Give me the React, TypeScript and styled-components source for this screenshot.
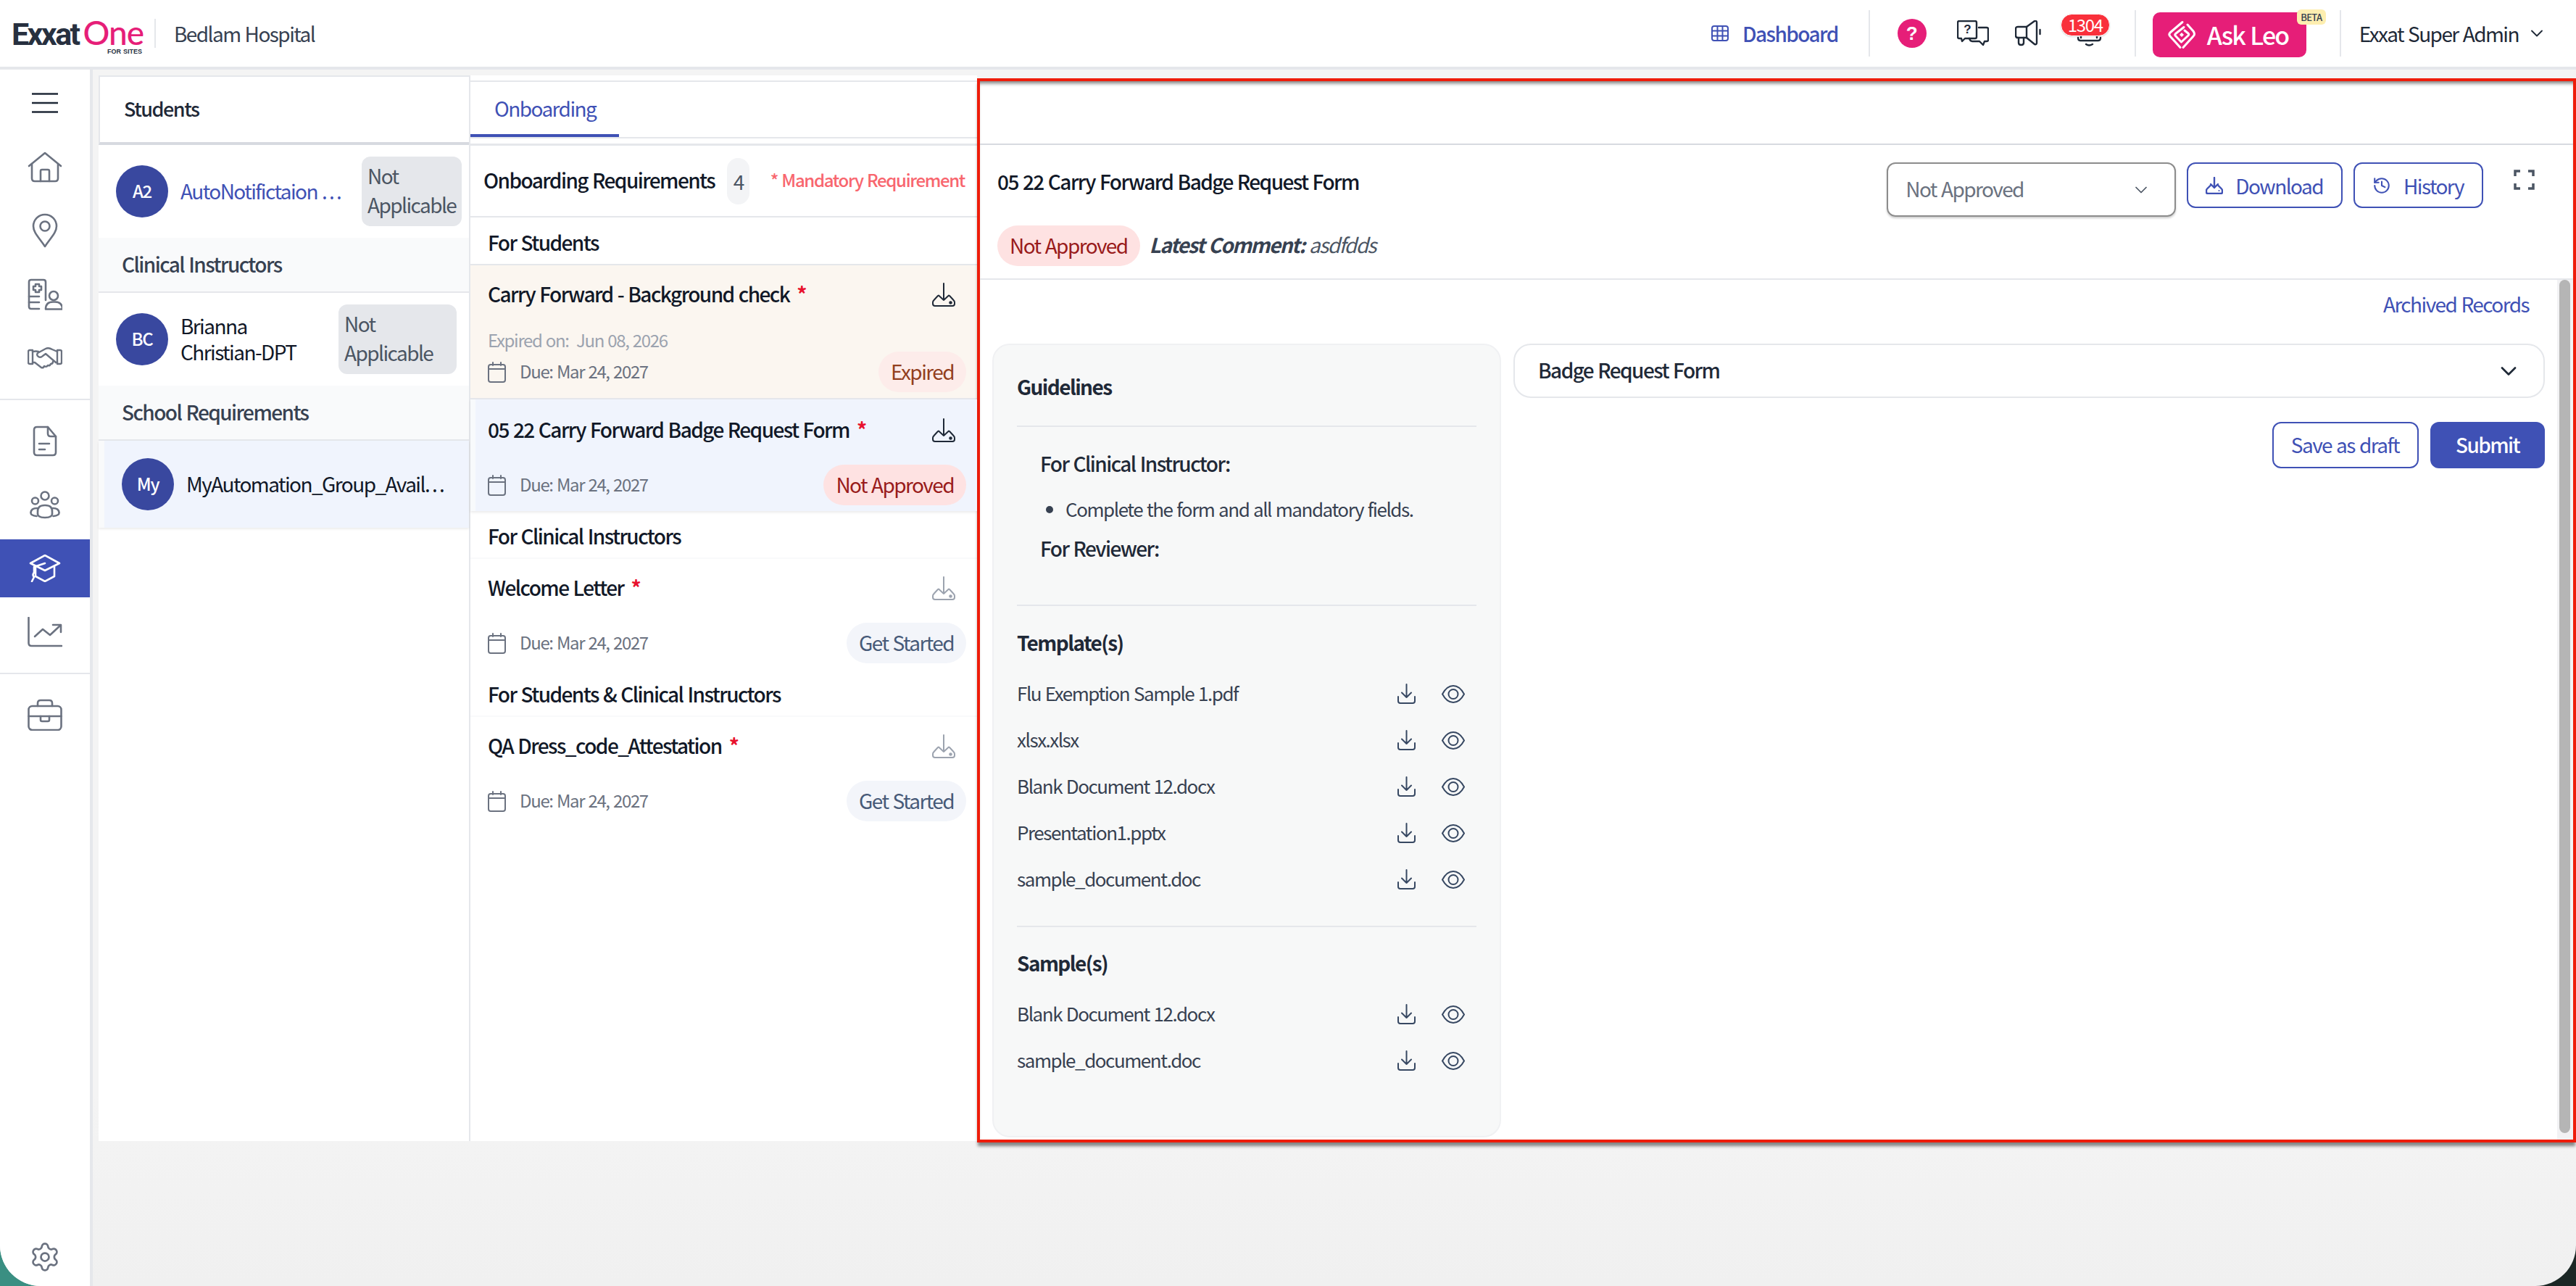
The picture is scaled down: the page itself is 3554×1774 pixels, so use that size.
import React from 'react';
import styled, { createGlobalStyle } from 'styled-components';
import { ChevronDown, History, Settings } from 'lucide-react';

const primary = '#3f51b5';
const line = '#e5e7eb';
const pink = '#e61e78';

const GlobalStyle = createGlobalStyle`
  html, body {
    margin: 0;
    padding: 0;
    height: 100%;
    overflow: hidden;
    background: linear-gradient(to right, #3a8f82 0 50%, #1b2725 50% 100%);
  }
  * { box-sizing: border-box; }
  body * { letter-spacing: -0.056em; word-spacing: 0.05em; }
  #root { height: 100%; }
`;

const Shell = styled.div`
  height: 1774px;
  width: 3554px;
  display: flex;
  flex-direction: column;
  overflow: hidden;
  background: linear-gradient(to bottom, #f4f4f4 85%, #f0f0f0);
  border-radius: 0 0 56px 56px;
  font-family: 'Noto Sans CJK SC', 'Noto Sans', sans-serif;
  font-size: 28px;
  line-height: 36px;
  color: #111827;
`;

/* top bar */
const Header = styled.header`
  height: 96px;
  flex: none;
  display: flex;
  align-items: center;
  background: #fff;
  border-bottom: 4px solid ${line};
  padding: 0 40px 0 16px;
`;
const Logo = styled.div`
  width: 180px;
  display: flex;
  flex-direction: column;
  margin-top: 10px;
`;
const LogoWord = styled.div`
  font-family: 'Roboto', sans-serif;
  font-size: 43px;
  line-height: 38px;
  font-weight: 700;
  letter-spacing: -2.6px;
  color: #27303f;
  white-space: nowrap;
  span {
    font-family: 'Lato', sans-serif;
    font-weight: 500;
    letter-spacing: -1px;
    margin-left: 6px;
    color: ${pink};
    font-size: 46px;
  }
`;
const LogoSub = styled.div`
  font-family: 'Liberation Sans', sans-serif;
  font-size: 9px;
  line-height: 10px;
  font-weight: 700;
  letter-spacing: 0;
  color: #27303f;
  text-align: right;
`;
const Rule = styled.div<{ $left: number; $height?: number }>`
  width: 2px;
  height: ${(p) => p.$height ?? 64}px;
  margin-left: ${(p) => p.$left}px;
  background: ${line};
  flex: none;
`;
const OrgName = styled.div`
  margin-left: 25px;
  color: #374151;
`;
const HeaderRight = styled.div`
  margin-left: auto;
  display: flex;
  align-items: center;
`;
const DashLink = styled.a`
  display: flex;
  align-items: center;
  gap: 19px;
  color: ${primary};
  font-weight: 500;
`;
const HelpDot = styled.div`
  width: 40px;
  height: 40px;
  margin-left: 38px;
  border-radius: 50%;
  background: ${pink};
  color: #fff;
  font-family: 'Liberation Sans', sans-serif;
  font-size: 26px;
  font-weight: 700;
  letter-spacing: 0;
  display: flex;
  align-items: center;
  justify-content: center;
`;
const TopIcon = styled.div<{ $left: number }>`
  margin-left: ${(p) => p.$left}px;
  display: flex;
  position: relative;
`;
const CountBadge = styled.span`
  position: absolute;
  left: -21px;
  top: -9px;
  width: 68px;
  height: 31px;
  border-radius: 16px;
  border: 1px solid #fff;
  background: #f9303b;
  color: #fff;
  font-size: 24px;
  line-height: 27px;
  text-align: center;
  box-shadow: 0 1px 2px rgba(0, 0, 0, 0.15);
`;
const AskLeo = styled.button`
  position: relative;
  width: 212px;
  height: 62px;
  margin-left: 23px;
  margin-top: 3px;
  padding: 0 0 0 20px;
  border: 0;
  border-radius: 10px;
  background: ${pink};
  color: #fff;
  font: inherit;
  font-size: 34px;
  font-weight: 500;
  display: flex;
  align-items: center;
  gap: 15px;
`;
const BetaTag = styled.span`
  position: absolute;
  right: -27px;
  top: -4px;
  width: 40px;
  height: 21px;
  border-radius: 6px;
  background: #fdeeb0;
  color: #374151;
  font-size: 13px;
  line-height: 21px;
  text-align: center;
`;
const UserName = styled.div`
  margin-left: 25px;
  display: flex;
  align-items: center;
  gap: 11px;
  color: #1f2937;
`;

/* page below the top bar */
const Body = styled.div`
  flex: 1;
  display: flex;
  min-height: 0;
`;
const Sidebar = styled.nav`
  width: 128px;
  flex: none;
  display: flex;
  flex-direction: column;
  align-items: stretch;
  background: #fff;
  border-right: 4px solid ${line};
  padding-top: 2px;
`;
const NavItem = styled.div<{ $active?: boolean }>`
  height: 80px;
  margin: 4px 0;
  flex: none;
  display: flex;
  align-items: center;
  justify-content: center;
  color: ${(p) => (p.$active ? '#fff' : '#6b7280')};
  background: ${(p) => (p.$active ? primary : 'transparent')};
  svg { color: ${(p) => (p.$active ? '#fff' : '#6b7280')}; }
`;
const NavRule = styled.div`
  height: 2px;
  margin: 12px 0;
  flex: none;
  background: ${line};
`;
const NavBottom = styled(NavItem)`
  margin: auto 0 0;
`;
const Main = styled.main`
  flex: 1;
  display: flex;
  align-items: flex-start;
  padding: 8px 0 0 8px;
  min-width: 0;
`;

/* students column */
const StudentsCol = styled.section`
  width: 513px;
  height: 1470px;
  flex: none;
  background: #fff;
  border-right: 2px solid ${line};
`;
const ColTitle = styled.div`
  height: 96px;
  display: flex;
  align-items: center;
  padding: 0 0 3px 33px;
  border: 2px solid ${line};
  border-right: 0;
  border-bottom: 4px solid #d7dae0;
  font-size: 27px;
  font-weight: 500;
  color: #1f2937;
`;
const PersonRow = styled.div<{ $selected?: boolean; $right?: number }>`
  height: ${(p) => (p.$selected ? 120 : 128)}px;
  display: flex;
  align-items: center;
  gap: 17px;
  padding: 0 ${(p) => p.$right ?? 10}px 0 24px;
  ${(p) =>
    p.$selected &&
    `background: #f0f4fd;
     border-left: 8px solid #f9fafb;
     box-shadow: 0 2px 3px rgba(0, 0, 0, 0.08);`}
`;
const Avatar = styled.div`
  width: 72px;
  height: 72px;
  flex: none;
  padding-bottom: 2px;
  border-radius: 50%;
  background: #39489f;
  color: #fff;
  font-size: 24px;
  font-weight: 500;
  display: flex;
  align-items: center;
  justify-content: center;
`;
const PersonName = styled.div<{ $link?: boolean }>`
  flex: 1;
  min-width: 0;
  padding-bottom: 3px;
  white-space: ${(p) => (p.$link ? 'nowrap' : 'normal')};
  color: ${(p) => (p.$link ? primary : '#111827')};
`;
const Dots = styled.span`
  letter-spacing: 0.08em;
`;
const GreyChip = styled.div<{ $width: number }>`
  width: ${(p) => p.$width}px;
  height: 96px;
  flex: none;
  padding: 6px 8px 10px;
  border-radius: 12px;
  background: ${line};
  color: #4b5563;
  line-height: 40px;
`;
const GroupLabel = styled.div`
  height: 76px;
  display: flex;
  align-items: center;
  padding: 0 0 3px 32px;
  background: #f9fafb;
  border-bottom: 2px solid ${line};
  font-weight: 500;
  color: #374151;
`;

/* requirements column */
const ReqCol = styled.section`
  width: 699px;
  height: 1470px;
  flex: none;
  background: #fff;
  padding-top: 7px;
`;
const TabBar = styled.div`
  height: 80px;
  border-top: 2px solid ${line};
  border-bottom: 2px solid ${line};
`;
const Tab = styled.div`
  width: 205px;
  height: 76px;
  padding-left: 33px;
  display: flex;
  align-items: center;
  color: ${primary};
  border-bottom: 4px solid ${primary};
`;
const ReqHeader = styled.div`
  height: 102px;
  margin-top: 7px;
  display: flex;
  align-items: center;
  padding: 0 17px 0 18px;
  border-top: 3px solid ${line};
  border-bottom: 2px solid ${line};
  white-space: nowrap;
`;
const ReqTitle = styled.div`
  padding-bottom: 3px;
  font-weight: 500;
  color: #111827;
`;
const CountPill = styled.div`
  width: 31px;
  height: 64px;
  margin-left: 17px;
  border-radius: 16px;
  background: #f3f4f6;
  color: #4b5563;
  display: flex;
  align-items: center;
  justify-content: center;
`;
const Mandatory = styled.div`
  margin-left: auto;
  padding-bottom: 3px;
  font-size: 24px;
  font-weight: 500;
  color: #f8666e;
`;
const ReqGroup = styled.div<{ $soft?: boolean }>`
  height: 66px;
  padding: 16px 0 0 24px;
  border-bottom: 2px solid ${(p) => (p.$soft ? '#f9fafb' : line)};
  font-weight: 500;
`;
const ReqCard = styled.div<{ $tone?: 'expired' | 'active' }>`
  padding: ${(p) => (p.$tone === 'active' ? 24 : 22)}px 15px 8px ${(p) => (p.$tone === 'active' ? 17 : 24)}px;
  background: ${(p) => (p.$tone === 'expired' ? '#fbf6f0' : p.$tone === 'active' ? '#f0f4fd' : '#fff')};
  ${(p) => p.$tone === 'expired' && `border-bottom: 2px solid ${line};`}
  ${(p) =>
    p.$tone === 'active' &&
    `border-left: 7px solid #f8fafc;
     box-shadow: 0 2px 3px rgba(0, 0, 0, 0.08);
     position: relative;`}
`;
const CardTop = styled.div`
  height: 36px;
  display: flex;
  align-items: center;
  justify-content: space-between;
  padding-right: 15px;
  font-weight: 500;
  color: #111827;
`;
const CardName = styled.span`
  padding-bottom: 3px;
`;
const Star = styled.span`
  color: #e8112d;
  font-size: 28px;
  font-weight: 700;
  margin-left: 4px;
`;
const ExpiredOn = styled.div`
  margin: 30px 0 1px;
  font-size: 24px;
  line-height: 30px;
  color: #9ca3af;
  white-space: pre;
`;
const CardMeta = styled.div<{ $gap: number }>`
  margin-top: ${(p) => p.$gap}px;
  height: 56px;
  display: flex;
  align-items: center;
  justify-content: space-between;
`;
const DueDate = styled.div`
  display: flex;
  align-items: center;
  gap: 19px;
  font-size: 24px;
  color: #6b7280;
`;
const DueText = styled.span`
  padding-bottom: 3px;
`;
const Status = styled.span<{ $kind: 'expired' | 'rejected' | 'start' }>`
  height: 56px;
  padding: 0 17px 3px;
  display: inline-flex;
  align-items: center;
  flex: none;
  border-radius: 28px;
  background: ${(p) => (p.$kind === 'expired' ? '#fdecea' : p.$kind === 'rejected' ? '#fee2e2' : '#f3f5fa')};
  color: ${(p) => (p.$kind === 'expired' ? '#933f1e' : p.$kind === 'rejected' ? '#991b1b' : '#475a78')};
`;

/* detail panel with the red marker frame */
const DetailPanel = styled.section`
  width: 2206px;
  height: 1468px;
  margin-top: 4px;
  flex: none;
  display: flex;
  flex-direction: column;
  background: #fff;
  border: 4px solid #ee1c0a;
  box-shadow: 0 6px 4px -1px rgba(0, 0, 0, 0.45), inset 0 6px 5px -3px rgba(0, 0, 0, 0.5);
`;
const DetailBlank = styled.div`
  height: 88px;
  flex: none;
  border-bottom: 2px solid #d7dae0;
`;
const DetailHead = styled.div`
  height: 186px;
  flex: none;
  display: flex;
  justify-content: space-between;
  padding: 0 53px 0 24px;
  border-bottom: 2px solid ${line};
`;
const HeadLeft = styled.div`
  padding-top: 32px;
`;
const HeadTitle = styled.div`
  font-weight: 500;
  color: #111827;
`;
const HeadStatus = styled.div`
  margin-top: 43px;
  display: flex;
  align-items: center;
  gap: 13px;
`;
const Comment = styled.div`
  padding-bottom: 5px;
  font-style: italic;
  color: #4b5563;
  b {
    font-weight: 700;
    color: #374151;
  }
`;
const HeadActions = styled.div`
  padding-top: 24px;
  display: flex;
  align-items: flex-start;
  gap: 15px;
`;
const SelectBox = styled.div`
  width: 399px;
  height: 75px;
  display: flex;
  align-items: center;
  justify-content: space-between;
  padding: 0 32px 0 24px;
  border: 2px solid #8c8c8c;
  border-radius: 12px;
  box-shadow: 0 2px 3px rgba(0, 0, 0, 0.2);
  color: #6b7280;
`;
const BoxText = styled.span`
  padding-bottom: 3px;
`;
const OutlineBtn = styled.button<{ $height?: number }>`
  height: ${(p) => p.$height ?? 63}px;
  padding: 0 25px 0 24px;
  display: flex;
  align-items: center;
  gap: 17px;
  background: #fff;
  border: 2px solid ${primary};
  border-radius: 12px;
  color: ${primary};
  font: inherit;
`;
const SolidBtn = styled.button`
  width: 158px;
  height: 64px;
  padding: 0 0 3px;
  background: ${primary};
  border: 0;
  border-radius: 12px;
  color: #fff;
  font: inherit;
  font-weight: 500;
`;
const Expand = styled.div`
  margin: 10px 0 0 27px;
  display: flex;
`;
const DetailScroll = styled.div`
  flex: 1;
  min-height: 0;
  display: flex;
`;
const DetailContent = styled.div`
  flex: 1;
  min-width: 0;
  padding: 15px 17px 0;
`;
const ArchivedLink = styled.div`
  height: 73px;
  padding-right: 22px;
  text-align: right;
  color: ${primary};
`;
const ScrollTrack = styled.div`
  width: 22px;
  flex: none;
  padding: 0 4px 9px 3px;
  background: #f2f2f4;
`;
const ScrollThumb = styled.div`
  height: 100%;
  border-radius: 8px;
  background: #b5b5b5;
`;
const Columns = styled.div`
  display: flex;
  gap: 17px;
`;
const GuideCard = styled.aside`
  width: 702px;
  height: 1095px;
  flex: none;
  display: flex;
  flex-direction: column;
  padding: 39px 32px 0;
  background: #f7f8f8;
  border: 2px solid #f0f1f3;
  border-radius: 24px;
`;
const GuideHeading = styled.div<{ $top?: number }>`
  margin: ${(p) => p.$top ?? 0}px 0 2px;
  font-weight: 700;
  color: #1f2937;
`;
const GuideRule = styled.div<{ $top: number }>`
  height: 2px;
  flex: none;
  margin-top: ${(p) => p.$top}px;
  background: ${line};
`;
const GuideSub = styled.div<{ $top: number }>`
  margin: ${(p) => p.$top}px 0 2px;
  padding-left: 32px;
  font-weight: 500;
  color: #1f2937;
`;
const GuideList = styled.ul`
  margin: 25px 0 2px;
  padding: 0 0 0 67px;
  font-size: 26px;
  color: #374151;
`;
const FileList = styled.div`
  margin-top: 19px;
`;
const FileRow = styled.div`
  height: 64px;
  display: flex;
  align-items: center;
  padding-right: 16px;
  font-size: 26px;
  color: #374151;
`;
const FileName = styled.div`
  flex: 1;
  padding-bottom: 3px;
`;
const FileIcons = styled.div`
  display: flex;
  align-items: center;
  gap: 36px;
`;
const FormSide = styled.div`
  flex: 1;
  min-width: 0;
`;
const Accordion = styled.div`
  height: 75px;
  display: flex;
  align-items: center;
  justify-content: space-between;
  padding: 0 30px 0 32px;
  border: 2px solid ${line};
  border-radius: 24px;
  font-weight: 500;
  color: #1f2937;
`;
const FormActions = styled.div`
  margin-top: 33px;
  display: flex;
  justify-content: flex-end;
  gap: 16px;
`;

/* drawn icons */
const TrayDownload = ({ soft }: { soft?: boolean }) => (
  <svg width="32" height="33" viewBox="0 0 32 33" fill="none" stroke={soft ? '#9ca3af' : '#1f2937'} strokeWidth="2" strokeLinecap="round" strokeLinejoin="round">
    <path d="M16 1v23M9 17.500l7 6.500 7-6.500" />
    <path d="M8 18 2.500 24Q1 25.500 1 27v2q0 3 3 3h24q3 0 3-3v-2q0-1.500-1.500-3L24 18" />
    <circle cx="25.500" cy="27.500" r="1.300" fill={soft ? '#9ca3af' : '#1f2937'} />
  </svg>
);
const CalendarIcon = () => (
  <svg width="25" height="29" viewBox="0 0 25 29" fill="none" stroke="#6b7280" strokeWidth="2" strokeLinecap="round">
    <rect x="1" y="4" width="23" height="24" rx="3" />
    <path d="M1 10h23M7 1v4M18 1v4" />
  </svg>
);
const SmallDownload = () => (
  <svg width="25" height="28" viewBox="0 0 25 28" fill="none" stroke="#374862" strokeWidth="2" strokeLinecap="round" strokeLinejoin="round">
    <path d="M12.500 1v18M6 12.500 12.500 19 19 12.500" />
    <path d="M1 18v6q0 3 3 3h17q3 0 3-3v-6" />
  </svg>
);
const EyeIcon = () => (
  <svg width="32" height="25" viewBox="0 0 32 25" fill="none" stroke="#374862" strokeWidth="2">
    <path d="M1 12.500C5 5 10 1 16 1s11 4 15 11.500C27 20 22 24 16 24S5 20 1 12.500Z" />
    <circle cx="16" cy="12.500" r="6.500" />
  </svg>
);
const BtnDownload = () => (
  <svg width="24" height="24" viewBox="0 0 24 24" fill="none" stroke={primary} strokeWidth="2.400" strokeLinecap="round" strokeLinejoin="round">
    <path d="M12 1v14M7 10l5 5 5-5" />
    <path d="M6.500 12 2 16.500Q1 17.500 1 19v2q0 2 2 2h18q2 0 2-2v-2q0-1.500-1-2.500L17.500 12" />
    <circle cx="18.500" cy="19" r="1" fill={primary} stroke="none" />
  </svg>
);
const GridIcon = () => (
  <svg width="24" height="22" viewBox="0 0 24 22" fill="none" stroke={primary} strokeWidth="2">
    <rect x="1" y="1" width="22" height="20" rx="3" />
    <path d="M1 7.500h22M1 14.500h22M8.500 1v20M15.500 1v20" />
  </svg>
);
const ChatIcon = () => (
  <svg width="44" height="36" viewBox="0 0 44 36" fill="none" stroke="#1f2937" strokeWidth="2.400" strokeLinejoin="round" strokeLinecap="round">
    <path d="M3 1h22q2 0 2 2v20q0 2-2 2H11l-4 4-1-4H3q-2 0-2-2V3q0-2 2-2Z" />
    <path d="M30 10h11q2 0 2 2v15q0 2-2 2h-3l-2 5-5-5H21q-3 0-4-4" />
    <text x="14" y="18" fontSize="17" fontWeight="700" fill="#1f2937" stroke="none" textAnchor="middle" fontFamily="Liberation Sans">?</text>
  </svg>
);
const MegaphoneIcon = () => (
  <svg width="38" height="36" viewBox="0 0 38 36" fill="none" stroke="#1f2937" strokeWidth="2.400" strokeLinejoin="round" strokeLinecap="round">
    <path d="M16 9H4q-3 0-3 3v9q0 3 3 3h12l11 9q3 1 3-2V3q0-3-3-2Z" />
    <path d="M16 9v15M5 24v7q0 3 3.500 3t3.500-3v-7M34.500 13v6" />
  </svg>
);
const BellIcon = () => (
  <svg width="37" height="36" viewBox="0 0 37 36" fill="none" stroke="#1f2937" strokeWidth="2.400" strokeLinejoin="round" strokeLinecap="round">
    <path d="M7 24V12Q7 2 18 2t11 10v12" />
    <path d="M3 24q0 4 3 4h25q3 0 3-4" />
    <path d="M14 33q4 3 9 0" />
  </svg>
);
const LeoMark = () => (
  <svg width="40" height="40" viewBox="0 0 40 40" fill="none" stroke="#fff" strokeWidth="3" strokeLinejoin="round" strokeLinecap="round">
    <path d="M21 2.500 4 17q-2.500 2.500 0 5l14 15.500" />
    <path d="M28 6l8 9q3 4 0 7L22 37.500" />
    <path d="M23 9.500 11.500 18.500q-1.500 1.500 0 3l8 8.500" />
    <path d="M24 14l5 4q1.500 1.500 0 3l-8.500 8" />
    <path d="M20 17l3 3-3 3-3-3Z" fill="#fff" stroke="none" />
  </svg>
);
const Fullscreen = () => (
  <svg width="29" height="28" viewBox="0 0 29 28" fill="none" stroke="#4b5563" strokeWidth="3.500">
    <path d="M2 9V2h7M20 2h7v7M27 19v7h-7M9 26H2v-7" />
  </svg>
);
const Hamburger = () => (
  <svg width="36" height="28" viewBox="0 0 36 28" stroke="#1f2937" strokeWidth="2.500">
    <path d="M0 1.500h36M0 14h36M0 26.500h36" />
  </svg>
);
const navStroke = { fill: 'none', stroke: 'currentColor', strokeWidth: 2.6, strokeLinecap: 'round', strokeLinejoin: 'round' } as const;
const HomeIcon = () => (
  <svg width="48" height="43" viewBox="0 0 48 43" {...navStroke}>
    <path d="M2 20 24 2l22 18" />
    <path d="M6 17v20q0 4 4 4h28q4 0 4-4V17" />
    <path d="M18 41V27q0-2 2-2h8q2 0 2 2v14" />
  </svg>
);
const PinIcon = () => (
  <svg width="36" height="48" viewBox="0 0 36 48" {...navStroke}>
    <path d="M18 46C10 34 2 27 2 18a16 16 0 0 1 32 0c0 9-8 16-16 28Z" />
    <circle cx="18" cy="18" r="6.500" />
  </svg>
);
const StaffIcon = () => (
  <svg width="48" height="44" viewBox="0 0 48 44" {...navStroke}>
    <path d="M16 42H5q-3 0-3-3V5q0-3 3-3h17q3 0 3 3v25" />
    <path d="M11 8h5v3h3v5h-3v3h-5v-3H8v-5h3Z" />
    <path d="M2 25h14M2 33h14" />
    <circle cx="36" cy="24" r="6" />
    <path d="M25 42.500q0-10 10-10h3q10 0 10 10Z" />
  </svg>
);
const HandshakeIcon = () => (
  <svg width="48" height="30" viewBox="0 0 48 30" {...navStroke} strokeWidth="2.400">
    <path d="M7 4H3Q1 4 1 6v15q0 2 2 2h4ZM41 4h4q2 0 2 2v15q0 2-2 2h-4Z" />
    <path d="M7 6q5-1 8 0M41 6l-7-3q-5-3-9-1L14 8q-2 3 1 5t6-1l4-3 14 12" />
    <path d="M7 21h3l9 7q3 1 4-2 3 2 5-1 3 1 4-2 3 0 3-3" />
    <path d="M39 21h2" />
  </svg>
);
const FileIcon = () => (
  <svg width="34" height="43" viewBox="0 0 34 43" {...navStroke}>
    <path d="M2 6q0-4 4-4h15l11 13v22q0 4-4 4H6q-4 0-4-4Z" />
    <path d="M21 2v9q0 4 4 4h7M9 25h14M9 33h8" />
  </svg>
);
const TeamIcon = () => (
  <svg width="42" height="39" viewBox="0 0 42 39" {...navStroke}>
    <circle cx="21" cy="7" r="5.500" />
    <circle cx="7.500" cy="14" r="4.500" />
    <circle cx="34.500" cy="14" r="4.500" />
    <path d="M11 30q-1-10 10-10t10 10q1 7-10 7t-10-7Z" />
    <path d="M10 24q-8 0-8.500 6-.5 4 8 5M32 24q8 0 8.500 6 .5 4-8 5" />
  </svg>
);
const CapIcon = () => (
  <svg width="44" height="38" viewBox="0 0 44 38" {...navStroke}>
    <path d="M22 1 2 12l20 10 20-10Z" />
    <path d="M9 16v14l13 7 13-7V16" />
    <path d="M22 12 7 17v8" />
    <path d="M7 25q-3 3 0 6l-3 6" />
  </svg>
);
const ChartIcon = () => (
  <svg width="48" height="42" viewBox="0 0 48 42" {...navStroke}>
    <path d="M1.500 1v35q0 4 4 4H47" />
    <path d="M10 27 21 17l10 8 14-13" />
    <path d="M35 11h11v10" />
  </svg>
);
const CaseIcon = () => (
  <svg width="48" height="44" viewBox="0 0 48 44" {...navStroke}>
    <rect x="1.500" y="10" width="45" height="33" rx="5" />
    <path d="M14 10V6q0-4 4-4h12q4 0 4 4v4M1.500 24h45" />
    <path d="M18 24v5q0 2 2 2h8q2 0 2-2v-5" />
  </svg>
);

const templates = ['Flu Exemption Sample 1.pdf', 'xlsx.xlsx', 'Blank Document 12.docx', 'Presentation1.pptx', 'sample_document.doc'];
const samples = ['Blank Document 12.docx', 'sample_document.doc'];

const FileLines = ({ names }: { names: string[] }) => (
  <FileList>
    {names.map((name) => (
      <FileRow key={name}>
        <FileName>{name}</FileName>
        <FileIcons>
          <SmallDownload />
          <EyeIcon />
        </FileIcons>
      </FileRow>
    ))}
  </FileList>
);

const Due = () => (
  <DueDate>
    <CalendarIcon />
    <DueText>Due: Mar 24, 2027</DueText>
  </DueDate>
);

const App: React.FC = () => (
  <Shell>
    <GlobalStyle />
    <Header>
      <Logo>
        <LogoWord>
          Exxat<span>One</span>
        </LogoWord>
        <LogoSub>FOR SITES</LogoSub>
      </Logo>
      <Rule $left={17} $height={40} />
      <OrgName>Bedlam Hospital</OrgName>
      <HeaderRight>
        <DashLink>
          <GridIcon />
          Dashboard
        </DashLink>
        <Rule $left={42} />
        <HelpDot>?</HelpDot>
        <TopIcon $left={42}>
          <ChatIcon />
        </TopIcon>
        <TopIcon $left={36}>
          <MegaphoneIcon />
        </TopIcon>
        <TopIcon $left={46}>
          <BellIcon />
          <CountBadge>1304</CountBadge>
        </TopIcon>
        <Rule $left={44} />
        <AskLeo>
          <LeoMark />
          Ask Leo
          <BetaTag>BETA</BetaTag>
        </AskLeo>
        <Rule $left={46} />
        <UserName>
          Exxat Super Admin
          <ChevronDown size={28} strokeWidth={1.6} />
        </UserName>
      </HeaderRight>
    </Header>
    <Body>
      <Sidebar>
        <NavItem><Hamburger /></NavItem>
        <NavItem><HomeIcon /></NavItem>
        <NavItem><PinIcon /></NavItem>
        <NavItem><StaffIcon /></NavItem>
        <NavItem><HandshakeIcon /></NavItem>
        <NavRule />
        <NavItem><FileIcon /></NavItem>
        <NavItem><TeamIcon /></NavItem>
        <NavItem $active><CapIcon /></NavItem>
        <NavItem><ChartIcon /></NavItem>
        <NavRule />
        <NavItem><CaseIcon /></NavItem>
        <NavBottom><Settings size={44} strokeWidth={1.5} /></NavBottom>
      </Sidebar>
      <Main>
        <StudentsCol>
          <ColTitle>Students</ColTitle>
          <PersonRow>
            <Avatar>A2</Avatar>
            <PersonName $link>AutoNotifictaion <Dots>...</Dots></PersonName>
            <GreyChip $width={138}>Not Applicable</GreyChip>
          </PersonRow>
          <GroupLabel>Clinical Instructors</GroupLabel>
          <PersonRow $right={17}>
            <Avatar>BC</Avatar>
            <PersonName>Brianna Christian-DPT</PersonName>
            <GreyChip $width={163}>Not Applicable</GreyChip>
          </PersonRow>
          <GroupLabel>School Requirements</GroupLabel>
          <PersonRow $selected>
            <Avatar>My</Avatar>
            <PersonName>MyAutomation_Group_Avail<Dots>...</Dots></PersonName>
          </PersonRow>
        </StudentsCol>
        <ReqCol>
          <TabBar>
            <Tab>Onboarding</Tab>
          </TabBar>
          <ReqHeader>
            <ReqTitle>Onboarding Requirements</ReqTitle>
            <CountPill>4</CountPill>
            <Mandatory>* Mandatory Requirement</Mandatory>
          </ReqHeader>
          <ReqGroup>For Students</ReqGroup>
          <ReqCard $tone="expired">
            <CardTop>
              <CardName>Carry Forward - Background check <Star>*</Star></CardName>
              <TrayDownload />
            </CardTop>
            <ExpiredOn>Expired on:  Jun 08, 2026</ExpiredOn>
            <CardMeta $gap={1}>
              <Due />
              <Status $kind="expired">Expired</Status>
            </CardMeta>
          </ReqCard>
          <ReqCard $tone="active">
            <CardTop>
              <CardName>05 22 Carry Forward Badge Request Form <Star>*</Star></CardName>
              <TrayDownload />
            </CardTop>
            <CardMeta $gap={30}>
              <Due />
              <Status $kind="rejected">Not Approved</Status>
            </CardMeta>
          </ReqCard>
          <ReqGroup $soft>For Clinical Instructors</ReqGroup>
          <ReqCard>
            <CardTop>
              <CardName>Welcome Letter <Star>*</Star></CardName>
              <TrayDownload soft />
            </CardTop>
            <CardMeta $gap={30}>
              <Due />
              <Status $kind="start">Get Started</Status>
            </CardMeta>
          </ReqCard>
          <ReqGroup $soft>For Students &amp; Clinical Instructors</ReqGroup>
          <ReqCard>
            <CardTop>
              <CardName>QA Dress_code_Attestation <Star>*</Star></CardName>
              <TrayDownload soft />
            </CardTop>
            <CardMeta $gap={30}>
              <Due />
              <Status $kind="start">Get Started</Status>
            </CardMeta>
          </ReqCard>
        </ReqCol>
        <DetailPanel>
          <DetailBlank />
          <DetailHead>
            <HeadLeft>
              <HeadTitle>05 22 Carry Forward Badge Request Form</HeadTitle>
              <HeadStatus>
                <Status $kind="rejected">Not Approved</Status>
                <Comment><b>Latest Comment:</b> asdfdds</Comment>
              </HeadStatus>
            </HeadLeft>
            <HeadActions>
              <SelectBox>
                <BoxText>Not Approved</BoxText>
                <ChevronDown size={28} strokeWidth={1.5} color="#4b5563" />
              </SelectBox>
              <OutlineBtn><BtnDownload />Download</OutlineBtn>
              <OutlineBtn><History size={26} strokeWidth={1.9} />History</OutlineBtn>
              <Expand><Fullscreen /></Expand>
            </HeadActions>
          </DetailHead>
          <DetailScroll>
            <DetailContent>
              <ArchivedLink>Archived Records</ArchivedLink>
              <Columns>
                <GuideCard>
                  <GuideHeading>Guidelines</GuideHeading>
                  <GuideRule $top={34} />
                  <GuideSub $top={32}>For Clinical Instructor:</GuideSub>
                  <GuideList>
                    <li>Complete the form and all mandatory fields.</li>
                  </GuideList>
                  <GuideSub $top={16}>For Reviewer:</GuideSub>
                  <GuideRule $top={58} />
                  <GuideHeading $top={32}>Template(s)</GuideHeading>
                  <FileLines names={templates} />
                  <GuideRule $top={32} />
                  <GuideHeading $top={31}>Sample(s)</GuideHeading>
                  <FileLines names={samples} />
                </GuideCard>
                <FormSide>
                  <Accordion>
                    <BoxText>Badge Request Form</BoxText>
                    <ChevronDown size={36} strokeWidth={1.8} color="#1f2937" />
                  </Accordion>
                  <FormActions>
                    <OutlineBtn $height={64}><BoxText>Save as draft</BoxText></OutlineBtn>
                    <SolidBtn>Submit</SolidBtn>
                  </FormActions>
                </FormSide>
              </Columns>
            </DetailContent>
            <ScrollTrack>
              <ScrollThumb />
            </ScrollTrack>
          </DetailScroll>
        </DetailPanel>
      </Main>
    </Body>
  </Shell>
);

export default App;
